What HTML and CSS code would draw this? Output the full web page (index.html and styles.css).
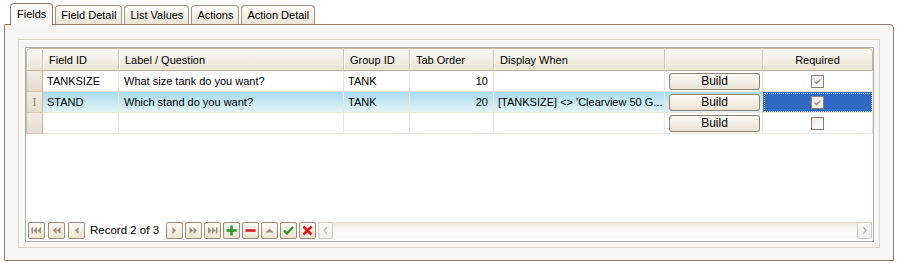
FILE: index.html
```html
<!DOCTYPE html>
<html lang="en">
<head>
  <meta charset="UTF-8">
  <title>Fields</title>
  <link rel="stylesheet" href="styles.css">
</head>
<body>
  <div class="tabs">
    <div class="tab active">Fields</div>
    <div class="tab">Field Detail</div>
    <div class="tab">List Values</div>
    <div class="tab">Actions</div>
    <div class="tab">Action Detail</div>
  </div>

  <div class="panel">
    <div class="frame">
      <div class="grid">
        <table class="rows">
          <colgroup>
            <col style="width:17px">
            <col style="width:76px">
            <col style="width:225px">
            <col style="width:66px">
            <col style="width:84px">
            <col style="width:171px">
            <col style="width:98px">
            <col>
          </colgroup>
          <thead>
            <tr>
              <th class="sel first"></th>
              <th>Field ID</th>
              <th>Label / Question</th>
              <th>Group ID</th>
              <th>Tab Order</th>
              <th>Display When</th>
              <th></th>
              <th class="center last">Required</th>
            </tr>
          </thead>
          <tbody>
            <tr>
              <td class="sel"></td>
              <td>TANKSIZE</td>
              <td>What size tank do you want?</td>
              <td>TANK</td>
              <td class="num">10</td>
              <td></td>
              <td><button class="build">Build</button></td>
              <td class="center"><span class="check on"><svg width="11" height="11" viewBox="0 0 11 11"><path d="M2.5 5.5 L4.5 7.5 L8.5 3.5" fill="none" stroke="#9d8c7b" stroke-width="1.4"/></svg></span></td>
            </tr>
            <tr class="current">
              <td class="sel"><span class="ibeam">I</span></td>
              <td>STAND</td>
              <td>Which stand do you want?</td>
              <td>TANK</td>
              <td class="num">20</td>
              <td>[TANKSIZE] &lt;&gt; 'Clearview 50 G...</td>
              <td><button class="build">Build</button></td>
              <td class="center focus"><span class="check on"><svg width="11" height="11" viewBox="0 0 11 11"><path d="M2.5 5.5 L4.5 7.5 L8.5 3.5" fill="none" stroke="#9d8c7b" stroke-width="1.4"/></svg></span></td>
            </tr>
            <tr>
              <td class="sel"></td>
              <td></td>
              <td></td>
              <td></td>
              <td></td>
              <td></td>
              <td><button class="build">Build</button></td>
              <td class="center"><span class="check"></span></td>
            </tr>
          </tbody>
        </table>

        <div class="filler"></div>

        <div class="navbar">
          <div class="nav-group">
            <span class="nav-btn"><svg width="15" height="15" viewBox="0 0 15 15"><rect x="2.5" y="4.5" width="1.6" height="6" fill="#a08b77"/><polygon points="8,4 8,11 4.5,7.5" fill="#a08b77"/><polygon points="12,4 12,11 8.5,7.5" fill="#a08b77"/></svg></span>
            <span class="nav-btn"><svg width="15" height="15" viewBox="0 0 15 15"><polygon points="7.5,4 7.5,11 4,7.5" fill="#a08b77"/><polygon points="11.5,4 11.5,11 8,7.5" fill="#a08b77"/></svg></span>
            <span class="nav-btn"><svg width="15" height="15" viewBox="0 0 15 15"><polygon points="9.5,4 9.5,11 6,7.5" fill="#a08b77"/></svg></span>
          </div>
          <span class="record">Record 2 of 3</span>
          <div class="nav-group tight">
            <span class="nav-btn"><svg width="15" height="15" viewBox="0 0 15 15"><polygon points="5.5,4 5.5,11 9,7.5" fill="#a08b77"/></svg></span>
            <span class="nav-btn"><svg width="15" height="15" viewBox="0 0 15 15"><polygon points="3.5,4 3.5,11 7,7.5" fill="#a08b77"/><polygon points="7.5,4 7.5,11 11,7.5" fill="#a08b77"/></svg></span>
            <span class="nav-btn"><svg width="15" height="15" viewBox="0 0 15 15"><polygon points="3,4 3,11 6.5,7.5" fill="#a08b77"/><polygon points="7,4 7,11 10.5,7.5" fill="#a08b77"/><rect x="10.9" y="4.5" width="1.6" height="6" fill="#a08b77"/></svg></span>
            <span class="nav-btn"><svg width="15" height="15" viewBox="0 0 15 15"><rect x="6.3" y="2.5" width="2.6" height="10" fill="#2f9a25"/><rect x="2.5" y="6.2" width="10.2" height="2.6" fill="#2f9a25"/></svg></span>
            <span class="nav-btn"><svg width="15" height="15" viewBox="0 0 15 15"><rect x="2.5" y="6.2" width="10.2" height="2.6" fill="#d91e1e"/></svg></span>
            <span class="nav-btn"><svg width="15" height="15" viewBox="0 0 15 15"><polygon points="3.5,9.5 11.5,9.5 7.5,5.5" fill="#a08b77"/></svg></span>
            <span class="nav-btn"><svg width="15" height="15" viewBox="0 0 15 15"><path d="M3 7.5 L6 10.5 L12 4" fill="none" stroke="#2f9a25" stroke-width="2.4"/></svg></span>
            <span class="nav-btn"><svg width="15" height="15" viewBox="0 0 15 15"><path d="M3.5 3.5 L11.5 11.5 M11.5 3.5 L3.5 11.5" fill="none" stroke="#d91e1e" stroke-width="2.6"/></svg></span>
          </div>
          <div class="hscroll">
            <span class="arrow"><svg width="13" height="15" viewBox="0 0 13 15"><path d="M8 4 L5 7.5 L8 11" fill="none" stroke="#c8beb4" stroke-width="1.2"/></svg></span>
            <span class="track"></span>
            <span class="arrow"><svg width="13" height="15" viewBox="0 0 13 15"><path d="M5 4 L8 7.5 L5 11" fill="none" stroke="#c8beb4" stroke-width="1.2"/></svg></span>
          </div>
        </div>
      </div>
    </div>
  </div>
</body>
</html>
```

FILE: styles.css
```css
* {
  box-sizing: border-box;
}

body {
  margin: 0;
  padding: 3px 5px 0 4px;
  background: #fff;
  font-family: "Liberation Sans", Arial, sans-serif;
  font-size: 11px;
  color: #000;
}

/* tab strip */
.tabs {
  display: flex;
  align-items: flex-end;
  gap: 2px;
  height: 21px;
  margin-left: 6px;
  position: relative;
  z-index: 1;
}

.tab {
  height: 19px;
  padding: 3px 5px 0;
  border: 1px solid #a09080;
  border-bottom: none;
  border-radius: 4px 4px 0 0;
  background: linear-gradient(#fefdfb, #ece5d7);
  white-space: nowrap;
}

.tab.active {
  height: 22px;
  margin-bottom: -1px;
  padding: 4px 6px 0;
  border-color: #8c7b69;
  background: #f9f8f6;
}

.panel {
  height: 237px;
  display: flex;
  flex-direction: column;
  padding: 14px 13px 12px;
  border: 1px solid #8c7b69;
  border-radius: 0 4px 0 0;
  background: #f7f6f4;
}

.frame {
  flex: 1;
  display: flex;
  padding: 7px 5px 5px 6px;
  border: 1px solid #d9d3ca;
  box-shadow: inset 1px 1px 0 #fff;
}

/* data grid */
.grid {
  flex: 1;
  display: flex;
  flex-direction: column;
  border: 1px solid #adadad;
  background: #fff;
}

.rows {
  width: 100%;
  table-layout: fixed;
  border-collapse: separate;
  border-spacing: 0;
}

.rows th {
  height: 23px;
  padding: 0 6px;
  text-align: left;
  font-weight: normal;
  white-space: nowrap;
  background: linear-gradient(#fbf9f4, #ece4d4);
  border-top: 1px solid #c9b9a3;
  border-right: 1px solid #d3c6b3;
  border-bottom: 1px solid #c2b098;
  box-shadow: inset 1px 0 0 #fff;
}

.rows th.first {
  border-left: 1px solid #c9b9a3;
  border-top-left-radius: 5px;
}

.rows th.last {
  border-right: 1px solid #c9b9a3;
  border-top-right-radius: 5px;
}

.rows td {
  height: 21px;
  padding: 0 4px;
  white-space: nowrap;
  overflow: hidden;
  border-right: 1px solid #ede6db;
  border-bottom: 1px solid #ede6db;
}

.rows td:nth-child(3) {
  padding-left: 5px;
}

.rows td.sel {
  padding: 0;
  text-align: center;
  background: linear-gradient(#f1ebe1, #e6ddcf);
  border-right: 1px solid #c5b49d;
  border-bottom: 1px solid #d3c6b3;
  border-left: 1px solid #c9b9a3;
}

.rows .center {
  text-align: center;
}

.rows td.num {
  text-align: right;
  padding-right: 5px;
}

.rows tr.current td {
  background: linear-gradient(#a9dbea, #e2f4f9);
}

.rows tr.current td.sel {
  background: linear-gradient(#f1ebe1, #e6ddcf);
}

.rows tr.current td.focus {
  background: #316ac5;
  outline: 1px dotted #dfe8f7;
  outline-offset: -2px;
}

.ibeam {
  font-family: "Liberation Serif", serif;
  font-size: 12px;
  color: #8f8070;
}

.build {
  display: block;
  width: 91px;
  height: 17px;
  margin: 0;
  padding: 0;
  font: 12px "Liberation Sans", Arial, sans-serif;
  color: #000;
  border: 1px solid #8f7f6f;
  border-radius: 3px;
  background: linear-gradient(#fcfaf6, #ebe3d4);
}

.check {
  display: inline-block;
  width: 13px;
  height: 13px;
  padding: 0;
  vertical-align: middle;
  border: 1px solid #8f7e6d;
  background: linear-gradient(135deg, #f0ede8, #fdfdfc);
}

.check svg {
  display: block;
}

.filler {
  flex: 1;
}

/* record navigator */
.navbar {
  height: 20px;
  display: flex;
  align-items: flex-start;
  padding: 1px 0 0 2px;
}

.nav-group {
  display: flex;
  gap: 3px;
  flex-shrink: 0;
}

.nav-group.tight {
  gap: 2px;
}

.nav-btn {
  flex-shrink: 0;
  width: 17px;
  height: 17px;
  display: flex;
  align-items: center;
  justify-content: center;
  border: 1px solid #a08b77;
  border-radius: 2px;
  background: linear-gradient(#fcfaf6, #ebe3d4);
}

.record {
  flex-shrink: 0;
  margin: 0 7px 0 5px;
  line-height: 17px;
  font-size: 11.5px;
}

.hscroll {
  flex: 1;
  display: flex;
  height: 17px;
  margin: 0 1px 0 2px;
  background: linear-gradient(#eee8e1, #fbf8f5 40%, #fdfcfb);
  border-top: 1px solid #e6dfd7;
}

.arrow {
  flex-shrink: 0;
  width: 15px;
  height: 17px;
  margin-top: -1px;
  display: flex;
  align-items: center;
  justify-content: center;
  border: 1px solid #d3ccc4;
  border-radius: 2px;
  background: linear-gradient(#fdfcfb, #f2eee9);
}

.track {
  flex: 1;
}
```
